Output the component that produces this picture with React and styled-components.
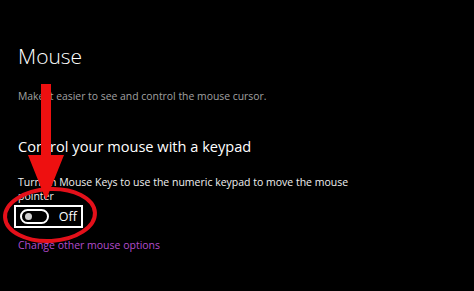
import React from "react"
import styled, { createGlobalStyle } from "styled-components"

const Global = createGlobalStyle`
  html, body { margin: 0; padding: 0; background: #000; }
  body { font-family: "Open Sans", "Noto Sans", sans-serif; }
`

export default function App() {
  const [on, setOn] = React.useState(false)
  return (
    <Page>
      <Global />
      <Title>Mouse</Title>
      <Desc>Make it easier to see and control the mouse cursor.</Desc>
      <Heading>Control your mouse with a keypad</Heading>
      <Label>Turn on Mouse Keys to use the numeric keypad to move the mouse pointer</Label>
      <ToggleRow onClick={() => setOn(!on)}>
        <Track $on={on}><Knob $on={on} /></Track>
        <State>{on ? "On" : "Off"}</State>
      </ToggleRow>
      <LinkText href="#">Change other mouse options</LinkText>
      <Marks width="474" height="291" viewBox="0 0 474 291">
        <ellipse cx="50" cy="215" rx="45" ry="26" fill="none" stroke="#e4101a" strokeWidth="4" transform="rotate(-3 50 215)" />
        <rect x="41" y="84" width="10" height="76" fill="#ee1010" />
        <polygon points="28,155 64,155 46,200" fill="#ee1010" />
      </Marks>
    </Page>
  )
}

const Page = styled.main`
  position: relative;
  width: 474px;
  height: 291px;
  box-sizing: border-box;
  padding: 43px 0 0 18px;
  background: #000;
  overflow: hidden;
`
const Title = styled.h1`
  margin: 0;
  font-size: 21px;
  font-weight: 300;
  line-height: 26px;
  color: #fff;
`
const Desc = styled.p`
  margin: 20px 0 0;
  font-size: 10.4px;
  line-height: 14px;
  color: #a0a0a0;
`
const Heading = styled.h2`
  margin: 33px 0 0;
  font-size: 14.6px;
  font-weight: 400;
  line-height: 20px;
  color: #fff;
`
const Label = styled.p`
  margin: 19px 0 0;
  width: 335px;
  font-size: 10.5px;
  line-height: 14px;
  color: #f0f0f0;
`
const ToggleRow = styled.div`
  display: flex;
  align-items: center;
  gap: 10px;
  width: 69px;
  height: 23px;
  margin: 2px 0 0 -4px;
  box-sizing: border-box;
  padding: 0 4px;
  border: 2px solid #fff;
  cursor: pointer;
`
const Track = styled.div`
  position: relative;
  width: 34px;
  height: 15px;
  box-sizing: border-box;
  border: 2px solid #fff;
  border-radius: 8px;
  background: ${p => (p.$on ? "#fff" : "transparent")};
`
const Knob = styled.div`
  position: absolute;
  top: 2px;
  left: ${p => (p.$on ? "20px" : "3px")};
  width: 7px;
  height: 7px;
  border-radius: 50%;
  background: #d0d0d0;
`
const State = styled.span`
  font-size: 12.5px;
  color: #fff;
`
const LinkText = styled.a`
  display: block;
  margin-top: 10px;
  font-size: 10.5px;
  line-height: 14px;
  color: #b44ccc;
  text-decoration: none;
`
const Marks = styled.svg`
  position: absolute;
  left: 0;
  top: 0;
  pointer-events: none;
`
